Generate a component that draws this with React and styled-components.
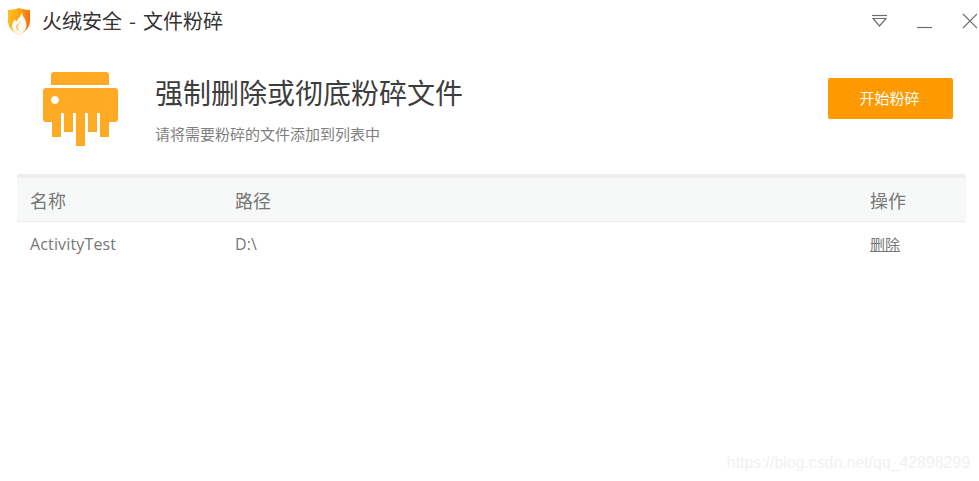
import React from 'react'
import styled, { createGlobalStyle } from 'styled-components'

const cjk = `"Noto Sans CJK SC", "Open Sans", sans-serif`

const GlobalStyle = createGlobalStyle`
  html, body {
    margin: 0;
    padding: 0;
    background: #fff;
  }
  body {
    font-family: "Open Sans", "Noto Sans CJK SC", sans-serif;
  }
`

const Page = styled.div`
  position: relative;
  width: 979px;
  height: 481px;
  overflow: hidden;
  background: #fff;
`

const TitleBar = styled.header`
  display: flex;
  align-items: center;
  height: 42px;
  padding: 0 2px 0 7px;
`

const AppTitle = styled.h1`
  margin: 0 0 0 11px;
  font: 400 20px/28px ${cjk};
  color: #333;
  white-space: pre;
`

const Dash = styled.span`
  margin: 0 2.5px;
`

const WindowButtons = styled.div`
  display: flex;
  align-items: center;
  gap: 30px;
  margin-left: auto;
`

const WindowButton = styled.button`
  display: block;
  width: 15px;
  height: 20px;
  padding: 0;
  border: 0;
  background: none;
  svg {
    display: block;
  }
`

const Banner = styled.section`
  display: flex;
  align-items: flex-start;
  height: 132px;
  padding: 0 26px 0 43px;
`

const ShredderIcon = styled.svg`
  flex: none;
  width: 75px;
  height: 74px;
  margin-top: 30px;
`

const Intro = styled.div`
  margin: 33px 0 0 37px;
`

const Heading = styled.h2`
  margin: 0;
  font: 400 28px/34px ${cjk};
  color: #3d3d3d;
`

const Hint = styled.p`
  margin: 15px 0 0;
  font: 400 15px/20px ${cjk};
  color: #7f7f7f;
`

const StartButton = styled.button`
  width: 125px;
  height: 41px;
  margin: 36px 0 0 auto;
  padding: 0 2px 2px 0;
  border: 0;
  border-radius: 2px;
  background: #ff9900;
  color: #fff;
  font: 400 15px/20px ${cjk};
`

const Table = styled.div`
  margin: 0 13px 0 17px;
  border-top: 4px solid #eeeeee;
  border-radius: 3px 3px 0 0;
`

const Columns = styled.div`
  display: grid;
  grid-template-columns: 205px 1fr 96px;
  align-items: center;
  padding-left: 13px;
`

const HeaderRow = styled(Columns)`
  height: 43px;
  background: #f7f8f8;
  border-bottom: 1px solid #eeeeee;
  color: #777;
  font: 400 18px/24px ${cjk};
`

const BodyRow = styled(Columns)`
  height: 44px;
  color: #777;
  font-size: 16px;
  letter-spacing: 0.15px;
  line-height: 20px;
`

const DeleteLink = styled.a`
  color: #777;
  letter-spacing: 0;
  font-size: 15px;
  text-decoration: underline;
  font-family: ${cjk};
`

const Watermark = styled.div`
  position: absolute;
  right: 9px;
  bottom: 8px;
  font: 400 15.85px/20px "Liberation Sans", sans-serif;
  color: #f1f1f1;
`

const ShieldLogo = () => (
  <svg width="24" height="28" viewBox="0 0 24 28" style={{ flex: 'none' }}>
    <defs>
      <linearGradient id="shield" x1="0" y1="0" x2="1" y2="0.25">
        <stop offset="0" stopColor="#ffc21c" />
        <stop offset="0.5" stopColor="#ffa815" />
        <stop offset="1" stopColor="#f9700e" />
      </linearGradient>
    </defs>
    <path
      d="M1 3 C5 2.8 9 2 12 1 C15 2 19 2.8 23 3 V14 C23 20.5 18 25 12 28 C6 25 1 20.5 1 14 Z"
      fill="url(#shield)"
    />
    <path
      d="M15 5 C14.6 9 19.5 12 19.5 18 C19.5 23 15.5 26.6 12 28 C8.5 26.4 5 23.5 5 19 C5 16 6.6 14.4 8 12.6 C8.6 13.6 9 14 9.6 14.4 C11 11.6 14 9 15 5 Z"
      fill="#fffaf2"
    />
    <path
      d="M13.5 14 C13.2 16 11.4 17.2 11 19.4 C10.6 21.4 11.6 23.2 13 24 C11 24 9 22.4 9 20 C9 17.4 12 16.4 13.5 14 Z"
      fill="#ffc66e"
    />
  </svg>
)

const Shredder = () => (
  <ShredderIcon viewBox="0 0 75 74">
    <path
      fill="#ffaa25"
      fillRule="evenodd"
      d="M8 3 a3 3 0 0 1 3 -3 H63 a3 3 0 0 1 3 3 V13 H8 Z
         M3 16 H72 a3 3 0 0 1 3 3 V47 a3 3 0 0 1 -3 3 H66 V65 H57 V41 H54 V60 H45 V41 H42 V74 H33 V41 H30 V60 H21 V41 H18 V65 H9 V50 H3 a3 3 0 0 1 -3 -3 V19 a3 3 0 0 1 3 -3 Z
         M12 24 a4 4 0 1 0 0.01 0 Z"
    />
  </ShredderIcon>
)

const App = () => (
  <Page>
    <GlobalStyle />
    <TitleBar>
      <ShieldLogo />
      <AppTitle>
        火绒安全 <Dash>-</Dash> 文件粉碎
      </AppTitle>
      <WindowButtons>
        <WindowButton aria-label="菜单">
          <svg width="15" height="20" viewBox="0 0 15 20" fill="none" stroke="#6e6e6e" strokeWidth="1.2">
            <path d="M0 4.5 H15" />
            <path d="M1 7.5 H14 L7.5 15 Z" />
          </svg>
        </WindowButton>
        <WindowButton aria-label="最小化">
          <svg width="15" height="20" viewBox="0 0 15 20" fill="none" stroke="#6e6e6e" strokeWidth="1.2">
            <path d="M0 16.5 H15" />
          </svg>
        </WindowButton>
        <WindowButton aria-label="关闭">
          <svg width="15" height="20" viewBox="0 0 15 20" fill="none" stroke="#6e6e6e" strokeWidth="1.2">
            <path d="M1 3 L15 17 M15 3 L1 17" />
          </svg>
        </WindowButton>
      </WindowButtons>
    </TitleBar>
    <Banner>
      <Shredder />
      <Intro>
        <Heading>强制删除或彻底粉碎文件</Heading>
        <Hint>请将需要粉碎的文件添加到列表中</Hint>
      </Intro>
      <StartButton>开始粉碎</StartButton>
    </Banner>
    <Table>
      <HeaderRow>
        <span>名称</span>
        <span>路径</span>
        <span>操作</span>
      </HeaderRow>
      <BodyRow>
        <span>ActivityTest</span>
        <span>D:\</span>
        <span>
          <DeleteLink>删除</DeleteLink>
        </span>
      </BodyRow>
    </Table>
    <Watermark>https://blog.csdn.net/qq_42898299</Watermark>
  </Page>
)

export default App
